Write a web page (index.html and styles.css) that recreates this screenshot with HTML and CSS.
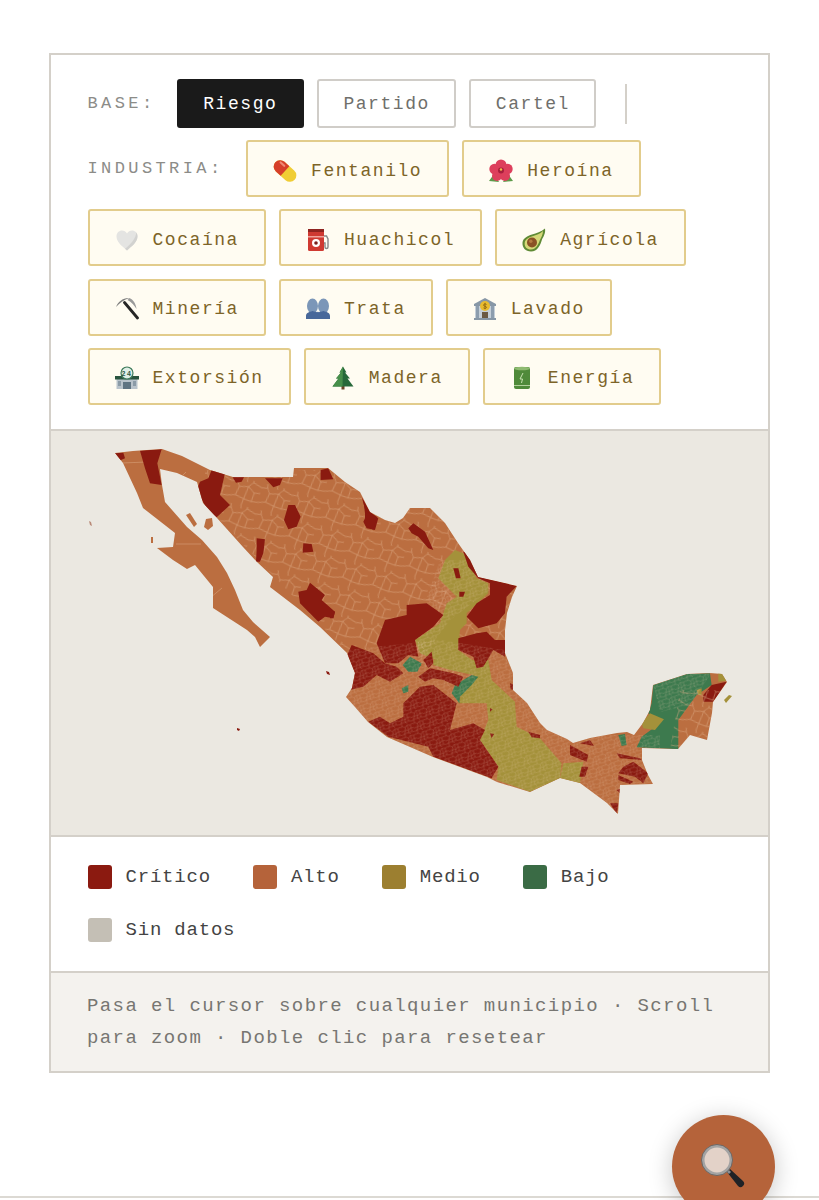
FILE: index.html
```html
<!DOCTYPE html>
<html lang="es">
<head>
<meta charset="utf-8">
<title>Mapa de riesgo municipal</title>
<link rel="stylesheet" href="styles.css">
</head>
<body>
<main class="card">
  <section class="controls">
    <div class="row base-row">
      <span class="label">BASE:</span>
      <button class="btn active">Riesgo</button>
      <button class="btn">Partido</button>
      <button class="btn">Cartel</button>
      <span class="divider"></span>
    </div>
    <div class="row industry-row">
      <span class="label label-industry">INDUSTRIA:</span>
      <button class="chip"><svg class="ico" viewBox="0 0 24 24"><g transform="rotate(42 12 12)"><rect x="-1" y="5.500" width="26" height="13" rx="6.500" fill="#f0cd35"/><path d="M5.500 5.500H12v13H5.500a6.500 6.500 0 0 1 0-13z" fill="#d63f2a"/><rect x="2" y="7.500" width="7" height="2.200" rx="1.100" fill="#ef8a74"/></g></svg>Fentanilo</button>
      <button class="chip"><svg class="ico" viewBox="0 0 24 24"><path d="M0 22l5-7 5 8zM24 22l-5-7-5 8z" fill="#5c9a4a"/><g fill="#dd3f5c"><circle cx="12" cy="6" r="5.500"/><circle cx="5.500" cy="10" r="5.200"/><circle cx="18.500" cy="10" r="5.200"/><circle cx="8" cy="17" r="5"/><circle cx="16" cy="17" r="5"/></g><circle cx="12" cy="11.500" r="3" fill="#a81f3c"/><circle cx="12" cy="10.500" r="1.200" fill="#f2c14b"/></svg>Heroína</button>
      <button class="chip"><svg class="ico" viewBox="0 0 24 24"><path d="M12 22.500C6 17.500 1.500 13.500 1.500 8.300 1.500 4.800 4 2.500 7 2.500c2 0 3.900 1 5 3 1.100-2 3-3 5-3 3 0 5.500 2.300 5.500 5.800 0 5.200-4.500 9.200-10.500 14.200z" fill="#e4e4e2"/><path d="M12 22.500c6-5 10.500-9 10.500-14.200 0-1.500-.5-2.800-1.200-3.800C21 10 16 16 10 20.800z" fill="#d2d2d0"/></svg>Cocaína</button>
      <button class="chip"><svg class="ico" viewBox="0 0 24 24"><rect x="2" y="1" width="16" height="22" rx="1.500" fill="#cf3a32"/><rect x="2" y="1" width="16" height="3" fill="#8f2420"/><rect x="2" y="8" width="16" height="1.500" fill="#f0a39c"/><circle cx="10" cy="15" r="4" fill="#fff"/><circle cx="10" cy="15" r="1.800" fill="#7a1f1c"/><path d="M18 8h2.500l1.500 3v8a1.500 1.500 0 0 1-3 0v-4H18" fill="none" stroke="#888" stroke-width="1.400"/></svg>Huachicol</button>
      <button class="chip"><svg class="ico" viewBox="0 0 24 24"><path d="M23 .5c.8 4.500-1.500 8-3 11-1.500 5.500-4.500 12-11 12C3.500 23.500 0 19.500.5 14.500 1 10 5.500 8 10 6.500c4.500-1.500 9-2.500 13-6z" fill="#5f8a35"/><path d="M21 3c0 3.500-1.800 6.500-3.300 9.500-1.500 4.500-4 9-8.700 9-4 0-6.800-2.800-6.300-6.800C3.200 11.300 6.500 9.500 10.500 8.300 14.500 7 18 6 21 3z" fill="#d5d878"/><circle cx="10" cy="14.500" r="5" fill="#8a5226"/><circle cx="8.800" cy="13.300" r="1.700" fill="#b47a42"/></svg>Agrícola</button>
      <button class="chip"><svg class="ico" viewBox="0 0 24 24"><path d="M1 10C3 5 8 .5 14.500 1 9 3 5 5.500 1 10z" fill="#7d7d7d"/><path d="M14.500 1c3.500 1.500 6.500 5.500 7 11-2-3.500-5-7-9-9z" fill="#9a9a9a"/><path d="M9.500 5.500L22.500 21" stroke="#262626" stroke-width="2.800" stroke-linecap="round"/></svg>Minería</button>
      <button class="chip"><svg class="ico" viewBox="0 0 24 24"><g fill="#7b96b8"><ellipse cx="6.500" cy="9" rx="5.500" ry="7.500"/><ellipse cx="17.500" cy="9" rx="5.500" ry="7.500"/></g><path d="M0 22v-3c0-3 3-4 6.500-5 4 1 5.500 2 5.500 0 0 2 1.500 1 5.500 0 3.500 1 6.500 2 6.500 5v3z" fill="#48689a"/></svg>Trata</button>
      <button class="chip"><svg class="ico" viewBox="0 0 24 24"><path d="M12 1L1 7v2h22V7z" fill="#8797a6"/><rect x="2" y="9" width="20" height="12" fill="#c5cfd8"/><g fill="#8c9dae"><rect x="3" y="9" width="3" height="12"/><rect x="18" y="9" width="3" height="12"/></g><rect x="9" y="15" width="6" height="6" fill="#6b5a44"/><rect x="1" y="21" width="22" height="2" fill="#8797a6"/><circle cx="12" cy="9" r="5" fill="#e8bb2e"/><path d="M13.500 7.500c-1-.8-3-.6-3 .6 0 1.600 3 .8 3 2.200 0 1.200-2 1.400-3 .6M12 5.800v6.400" fill="none" stroke="#8c6510" stroke-width=".9"/></svg>Lavado</button>
      <button class="chip"><svg class="ico" viewBox="0 0 24 24"><rect x="1.500" y="11" width="21" height="12" fill="#b9c3cb"/><rect x="0" y="10" width="24" height="3.500" fill="#29543f"/><circle cx="12" cy="7" r="6" fill="#dfeee6" stroke="#3d7a5a" stroke-width="1.200"/><text x="12" y="9.500" class="store-num">24</text><rect x="8" y="16" width="8" height="7" fill="#5f7482"/><rect x="3" y="15" width="3" height="5" fill="#8b9ba7"/><rect x="18" y="15" width="3" height="5" fill="#8b9ba7"/></svg>Extorsión</button>
      <button class="chip"><svg class="ico" viewBox="0 0 24 24"><rect x="10.500" y="19" width="3" height="4.500" fill="#6d4526"/><path d="M12 .5l3.500 6H14l5 6h-2.500l6 8h-21l6-8H5l5-6H8.500z" fill="#27693a"/><path d="M12 .5l-3.500 6H10l-5 6h2.500l-6 8h10z" fill="#478f4a"/></svg>Madera</button>
      <button class="chip"><svg class="ico" viewBox="0 0 24 24"><rect x="4" y="1" width="16" height="22" rx="2" fill="#4f8a3a"/><ellipse cx="12" cy="2.500" rx="8" ry="1.800" fill="#8fbb72"/><rect x="4" y="19" width="16" height="1" fill="#b3d09c"/><path d="M13 7l-3 6h2.500l-1 4" fill="none" stroke="#c9e2b3" stroke-width="1"/></svg>Energía</button>
    </div>
  </section>

  <section class="map-wrap">
    <svg class="map" viewBox="51 431 717 404" role="img" aria-label="Mapa de México por municipio">
      <defs>
        <clipPath id="mx">
          <path d="M115,453 133,451 147,450 162,449 182,456 210,470 233,477 293,477 294,468 328,468 345,482 360,492 370,512 385,520 395,523 403,518 410,508 430,508 445,523 458,543 470,560 478,577 500,582 517,586 512,597 507,613 505,630 505,653 513,673 513,690 527,703 540,723 547,730 567,739 573,743 590,738 617,733 627,732 634,735 643,723 650,710 653,685 687,674 710,673 722,674 727,682 713,702 712,713 707,740 690,735 678,749 642,748 642,760 648,775 653,784 620,785 618,814 607,803 580,783 560,778 530,792 497,782 487,777 433,757 387,737 368,722 355,707 346,697 352,688 355,673 347,653 320,627 300,610 270,587 273,577 257,562 243,547 217,518 203,503 197,482 177,473 160,469 162,485 165,502 187,527 202,540 217,557 227,573 235,590 243,610 253,622 270,637 260,647 255,637 247,630 213,608 213,587 195,565 187,569 173,560 157,548 173,547 175,533 143,508 137,493 123,463z"/>
        </clipPath>
        <pattern id="coarse" width="31" height="27" patternUnits="userSpaceOnUse" patternTransform="rotate(14)">
          <path d="M0 5 6 4 9 9 18 7 22 2 31 5M9 9 7 18 0 20M7 18 16 20 18 7M16 20 15 27M22 2 22 0M18 7 25 12 31 11M25 12 24 21 31 20M16 20 24 21M6 4 5 0M15 0 16 3" fill="none" stroke="#dcaa84" stroke-width=".5"/>
        </pattern>
        <pattern id="fine" width="13" height="11" patternUnits="userSpaceOnUse" patternTransform="rotate(-18)">
          <path d="M0 2 2 1.500 4.500 3 7 1.500 10 2 13 1.500M2 1.500 2 0M4.500 3 4 6 0 6.500M4 6 7 6.500 7 1.500M7 6.500 10 5 10 2M10 5 13 6M7 6.500 6 9 8 11M6 9 2 9 0 10M2 9 4 6M6 9 10 9 13 10M10 9 10 5M2 9 2 11" fill="none" stroke="#efd0b0" stroke-opacity=".42" stroke-width=".4"/>
        </pattern>
      </defs>
      <g clip-path="url(#mx)">
        <rect class="c-alto" x="100" y="440" width="640" height="390"/>
        <polygon points="205,470 520,470 520,640 345,650 205,505" fill="url(#coarse)"/>
        <path d="M176 544H201M210 598 222 588M122 463 147 462M178 480 186 472" fill="none" stroke="#dcaa84" stroke-width=".5"/>

        <g transform="translate(330 500) scale(.3333)" class="c-medio">
          <polygon points="345,180 375,150 400,160 440,235 475,250 475,280 410,340 410,370 390,390 385,450 440,490 430,520 340,490 270,460 255,420 330,370 350,310 380,290 325,235"/>
        </g>
        <g transform="translate(340 660) scale(.3333)">
          <polygon class="c-medio" points="280,0 420,0 445,0 455,60 525,125 530,200 600,235 665,310 660,355 570,395 470,360 475,320 420,240 445,180 440,130 355,130 365,100 395,70 400,45 330,30 280,15"/>
          <polygon class="c-medio" points="670,310 730,305 720,370 660,355"/>
          <polygon class="c-bajo" points="940,75 1040,42 1110,40 1115,75 1070,105 1015,180 1015,268 890,262 905,230 960,190 925,160 935,130"/>
          <polygon class="c-medio" points="905,190 930,160 972,178 945,210 910,205"/>
          <polygon class="c-medio" points="1070,90 1085,85 1085,105 1075,105"/>
          <polygon class="c-medio" points="1135,35 1155,40 1158,62 1135,65"/>
          <polygon class="c-bajo" points="835,225 855,222 860,255 845,258"/>
          <polygon class="c-bajo" points="190,15 215,0 245,15 215,35"/>
          <polygon class="c-bajo" points="335,100 345,75 395,45 415,50 395,75 360,110 358,130"/>
          <polygon class="c-bajo" points="185,85 205,75 205,95 190,100"/>
        </g>
        <g transform="translate(330 500) scale(.3333)" class="c-bajo">
          <polygon points="218,495 240,470 275,490 262,515 235,515"/>
        </g>
        <polygon points="440,560 478,560 490,590 450,620 420,660 480,680 420,665 412,640" fill="url(#fine)"/>

        <g transform="translate(80 440) scale(.3333)" class="c-critico">
          <polygon points="104,40 130,38 135,55 118,62"/>
          <polygon points="180,32 245,28 232,70 245,135 210,130 195,85"/>
          <polygon points="395,90 435,100 420,165 450,195 410,232 385,215 350,150 360,125 385,115"/>
          <polygon points="458,112 492,112 485,125 468,128"/>
          <polygon points="555,115 608,115 600,135 580,142 565,125"/>
          <polygon points="722,90 745,85 760,118 722,120"/>
          <polygon points="845,170 870,215 895,235 885,270 860,265 850,245 860,225"/>
          <polygon points="625,195 645,195 662,230 650,260 625,268 612,240"/>
          <polygon points="530,295 555,298 550,340 540,365 528,365 530,330"/>
          <polygon points="670,310 695,312 700,335 668,338"/>
          <polygon points="690,428 735,465 725,480 765,515 760,535 735,530 715,545 660,490 655,455 680,450"/>
        </g>
        <g transform="translate(330 500) scale(.3333)" class="c-critico">
          <polygon points="235,85 250,70 285,95 310,150 295,145 265,110 245,100"/>
          <polygon points="100,0 110,35 140,50 130,90 105,75 105,40"/>
          <polygon points="0,330 15,335 10,355 0,355"/>
          <polygon points="400,155 420,160 445,230 560,258 530,290 525,340 500,370 445,385 410,350 440,310 480,285 480,250 445,235 415,200"/>
          <polygon points="370,205 385,205 392,235 378,235"/>
          <polygon points="388,275 405,275 400,290 388,290"/>
          <polygon points="385,415 440,400 470,395 495,420 525,420 525,470 490,450 460,500 440,505 430,470 385,450"/>
          <polygon points="230,315 290,310 340,345 310,380 255,420 265,470 235,465 205,490 165,490 140,430 165,360 230,345"/>
          <polygon points="45,480 65,435 130,460 165,490 200,500 220,520 180,545 140,525 100,560 60,570"/>
          <polygon points="280,480 305,455 310,490 295,505"/>
          <polygon points="265,530 300,505 370,520 400,530 385,560 340,540 310,535 285,545"/>
        </g>
        <g transform="translate(340 660) scale(.3333)" class="c-critico">
          <polygon points="85,185 120,170 150,190 190,170 190,130 240,80 280,75 350,130 330,210 400,190 435,210 420,240 475,320 455,355 280,290 265,260 145,230"/>
          <polygon points="690,255 745,285 740,305 690,285"/>
          <polygon points="720,250 750,240 762,258"/>
          <polygon points="725,320 745,320 735,350 718,350"/>
          <polygon points="565,215 600,225 600,235 575,232"/>
          <polygon points="510,70 525,75 525,90 512,88"/>
          <polygon points="830,280 900,295 905,300 840,295"/>
          <polygon points="850,320 880,305 925,340 910,370 885,350 835,340"/>
          <polygon points="835,345 880,365 870,372 835,360"/>
          <polygon points="830,390 845,385 840,400"/>
          <polygon points="810,430 835,430 830,462"/>
          <polygon points="1115,75 1160,65 1120,125 1090,125 1090,105"/>
          <polygon points="450,145 458,148 450,155"/>
          <polygon points="450,220 462,222 455,235"/>
        </g>

        <polygon points="345,650 440,640 505,650 570,735 660,735 660,820 480,800 340,720" fill="url(#fine)"/>
        <polygon points="680,690 730,690 705,745 670,750" fill="url(#coarse)"/>
        <polygon points="650,672 712,672 690,705 660,712" fill="url(#fine)"/>
      </g>

      <g class="c-alto">
        <polygon points="186,515 190,513 197,524 194,527"/>
        <polygon points="206,519 212,518 213,526 208,530 204,527"/>
        <polygon points="151,537 153,537 153,543 151,543"/>
      </g>
      <polygon class="c-medio" points="732,696 726,703 724,700 729,695"/>
      <polygon class="c-mute" points="89,521 91,522 92,526 90,525"/>
      <polygon class="c-critico" points="326,671 329,672 330,675 327,674"/>
      <polygon class="c-critico" points="237,728 240,729 239,731 237,730"/>
    </svg>
  </section>

  <section class="legend">
    <span class="item"><i class="sw sw-critico"></i>Crítico</span>
    <span class="item"><i class="sw sw-alto"></i>Alto</span>
    <span class="item"><i class="sw sw-medio"></i>Medio</span>
    <span class="item"><i class="sw sw-bajo"></i>Bajo</span>
    <span class="item"><i class="sw sw-none"></i>Sin datos</span>
  </section>

  <p class="hint">Pasa el cursor sobre cualquier municipio · Scroll para zoom · Doble clic para resetear</p>
</main>

<footer class="foot"></footer>

<button class="fab" aria-label="Buscar"><svg viewBox="0 0 48 48" class="fab-ico"><path d="M29 31l3-3 13 12a3.500 3.500 0 0 1-5 5z" fill="#1f2226"/><path d="M27 29l2-2 4 4-2 2z" fill="#8b8f94"/><circle cx="19" cy="19" r="14" fill="#e3d2c8" stroke="#a3a3a3" stroke-width="3"/><circle cx="19" cy="19" r="15.500" fill="none" stroke="#5e5e5e" stroke-width=".8"/></svg></button>
</body>
</html>
```
FILE: styles.css
```css
* { box-sizing: border-box; }
html, body { margin: 0; padding: 0; }
body {
  position: relative;
  height: 1200px;
  overflow: hidden;
  background: #fff;
  font-family: "Liberation Mono", "DejaVu Sans Mono", monospace;
  padding-top: 53px;
}
.card {
  width: 721px;
  margin-left: 49px;
  border: 2px solid #d4d0c9;
  background: #fff;
}
.controls {
  display: flex;
  flex-direction: column;
  gap: 12px;
  padding: 24px 36px 24.1px 36.5px;
  border-bottom: 2px solid #d4d0c9;
}
.row { display: flex; align-items: center; }
.base-row { gap: 13px; }
.industry-row { flex-wrap: wrap; gap: 12.3px 13px; }
.label {
  font-size: 17px;
  letter-spacing: 3.4px;
  color: #8c8c88;
  margin-right: 8.25px;
}
.label-industry { margin-right: 9.5px; }
.btn, .chip {
  font-family: inherit;
  font-size: 18px;
  letter-spacing: 1.55px;
  margin: 0;
  border-radius: 3px;
  cursor: pointer;
}
.btn {
  height: 49px;
  padding: 0 24.5px;
  border: 2px solid #d0cdc8;
  background: #fff;
  color: #6f6f6b;
}
.btn.active {
  border-color: #1a1a1a;
  background: #1a1a1a;
  color: #fff;
}
.divider {
  width: 2px;
  height: 40px;
  margin-left: 16px;
  background: #d4d0c9;
}
.chip {
  display: flex;
  align-items: center;
  gap: 14px;
  height: 57px;
  padding: 4px 25px 0;
  border: 2px solid #e2cc8c;
  background: #fffcf2;
  color: #7d6428;
}
.ico { width: 24px; height: 24px; flex: none; }
.store-num {
  font-family: "Liberation Sans", sans-serif;
  font-size: 7px;
  font-weight: 700;
  text-anchor: middle;
  fill: #2c5a45;
}
.map-wrap { height: 406px; background: #ebe8e1; border-bottom: 2px solid #d4d0c9; }
.map { display: block; width: 100%; height: 100%; }
.c-alto { fill: #bb6e40; }
.c-medio { fill: #a4913a; }
.c-bajo { fill: #3d7a4e; }
.c-critico { fill: #8a1a10; }
.c-mute { fill: #b98a78; }
.legend {
  display: flex;
  flex-wrap: wrap;
  gap: 29px 42px;
  padding: 28px 36px 29px 36.5px;
  border-bottom: 2px solid #d4d0c9;
}
.item {
  display: flex;
  align-items: center;
  gap: 14px;
  height: 24px;
  font-size: 19px;
  letter-spacing: .8px;
  color: #444;
}
.sw { width: 24px; height: 24px; border-radius: 3px; flex: none; }
.sw-critico { background: #8b1a10; }
.sw-alto { background: #b5633a; }
.sw-medio { background: #9c7f30; }
.sw-bajo { background: #3a6b45; }
.sw-none { background: #c4bfb5; }
.hint {
  margin: 0;
  padding: 17px 36px;
  background: #f4f2ee;
  color: #777672;
  font-size: 19px;
  letter-spacing: 1.4px;
  line-height: 32px;
}
.foot {
  position: absolute;
  left: 0;
  right: 0;
  top: 1196px;
  height: 4px;
  border-top: 2px solid #dcd9d3;
}
.fab {
  position: absolute;
  left: 672px;
  top: 1115px;
  width: 103px;
  height: 103px;
  padding: 0;
  border: 0;
  border-radius: 50%;
  background: #b5633a;
  box-shadow: 0 4px 24px rgba(0,0,0,.22);
  display: flex;
  align-items: center;
  justify-content: center;
}
.fab-ico { width: 48px; height: 48px; margin: 0 3px 3px 0; }
```
